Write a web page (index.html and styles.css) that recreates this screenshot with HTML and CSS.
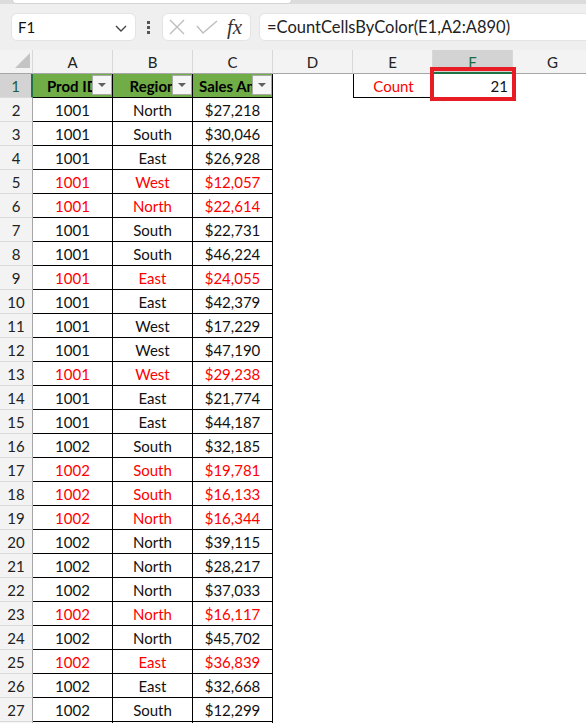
FILE: index.html
```html
<!DOCTYPE html>
<html lang="en">
<head>
    <meta charset="UTF-8">
    <meta name="viewport" content="width=device-width, initial-scale=1.0">
    <title>CountCellsByColor</title>
    <link rel="stylesheet" href="styles.css">
</head>
<body>

    <div class="formula-bar">
        <div class="ribbon-edge">
            <div class="ribbon-panel"></div>
        </div>
        <div class="bar-row">
            <div class="name-box">
                <span>F1</span>
                <svg class="chevron" width="12" height="7" viewBox="0 0 12 7"><path d="M1 1l5 5 5-5" fill="none" stroke="#444" stroke-width="1.4"/></svg>
            </div>
            <div class="grip"><i></i><i></i><i></i></div>
            <div class="fx-box">
                <svg width="16" height="16" viewBox="0 0 16 16"><path d="M1 1l14 14M15 1L1 15" stroke="#bdbdbd" stroke-width="1.4"/></svg>
                <svg width="22" height="14" viewBox="0 0 22 14"><path d="M1 6l6 7L21 1" fill="none" stroke="#bdbdbd" stroke-width="1.4"/></svg>
                <span class="fx">fx</span>
            </div>
            <div class="formula">=CountCellsByColor(E1,A2:A890)</div>
        </div>
    </div>

    <div class="sheet">
        <div class="row col-head">
            <div class="corner"><span></span></div>
            <div class="ch">A</div>
            <div class="ch">B</div>
            <div class="ch">C</div>
            <div class="ch">D</div>
            <div class="ch">E</div>
            <div class="ch selected">F</div>
            <div class="ch">G</div>
        </div>

        <div class="row">
            <div class="rh selected">1</div>
            <div class="c head"><span>Prod ID</span><b class="filter"></b></div>
            <div class="c head"><span>Region</span><b class="filter"></b></div>
            <div class="c head left"><span>Sales Amount</span><b class="filter"></b></div>
            <div class="blank"></div>
            <div class="label">Count</div>
            <div class="result">21</div>
        </div>

        <div class="row"><div class="rh">2</div><div class="c">1001</div><div class="c">North</div><div class="c">$27,218</div></div>
        <div class="row"><div class="rh">3</div><div class="c">1001</div><div class="c">South</div><div class="c">$30,046</div></div>
        <div class="row"><div class="rh">4</div><div class="c">1001</div><div class="c">East</div><div class="c">$26,928</div></div>
        <div class="row red"><div class="rh">5</div><div class="c">1001</div><div class="c">West</div><div class="c">$12,057</div></div>
        <div class="row red"><div class="rh">6</div><div class="c">1001</div><div class="c">North</div><div class="c">$22,614</div></div>
        <div class="row"><div class="rh">7</div><div class="c">1001</div><div class="c">South</div><div class="c">$22,731</div></div>
        <div class="row"><div class="rh">8</div><div class="c">1001</div><div class="c">South</div><div class="c">$46,224</div></div>
        <div class="row red"><div class="rh">9</div><div class="c">1001</div><div class="c">East</div><div class="c">$24,055</div></div>
        <div class="row"><div class="rh">10</div><div class="c">1001</div><div class="c">East</div><div class="c">$42,379</div></div>
        <div class="row"><div class="rh">11</div><div class="c">1001</div><div class="c">West</div><div class="c">$17,229</div></div>
        <div class="row"><div class="rh">12</div><div class="c">1001</div><div class="c">West</div><div class="c">$47,190</div></div>
        <div class="row red"><div class="rh">13</div><div class="c">1001</div><div class="c">West</div><div class="c">$29,238</div></div>
        <div class="row"><div class="rh">14</div><div class="c">1001</div><div class="c">East</div><div class="c">$21,774</div></div>
        <div class="row"><div class="rh">15</div><div class="c">1001</div><div class="c">East</div><div class="c">$44,187</div></div>
        <div class="row"><div class="rh">16</div><div class="c">1002</div><div class="c">South</div><div class="c">$32,185</div></div>
        <div class="row red"><div class="rh">17</div><div class="c">1002</div><div class="c">South</div><div class="c">$19,781</div></div>
        <div class="row red"><div class="rh">18</div><div class="c">1002</div><div class="c">South</div><div class="c">$16,133</div></div>
        <div class="row red"><div class="rh">19</div><div class="c">1002</div><div class="c">North</div><div class="c">$16,344</div></div>
        <div class="row"><div class="rh">20</div><div class="c">1002</div><div class="c">North</div><div class="c">$39,115</div></div>
        <div class="row"><div class="rh">21</div><div class="c">1002</div><div class="c">North</div><div class="c">$28,217</div></div>
        <div class="row"><div class="rh">22</div><div class="c">1002</div><div class="c">North</div><div class="c">$37,033</div></div>
        <div class="row red"><div class="rh">23</div><div class="c">1002</div><div class="c">North</div><div class="c">$16,117</div></div>
        <div class="row"><div class="rh">24</div><div class="c">1002</div><div class="c">North</div><div class="c">$45,702</div></div>
        <div class="row red"><div class="rh">25</div><div class="c">1002</div><div class="c">East</div><div class="c">$36,839</div></div>
        <div class="row"><div class="rh">26</div><div class="c">1002</div><div class="c">East</div><div class="c">$32,668</div></div>
        <div class="row"><div class="rh">27</div><div class="c">1002</div><div class="c">South</div><div class="c">$12,299</div></div>
        <div class="row"><div class="rh"></div><div class="c"></div><div class="c"></div><div class="c"></div></div>

        <div class="highlight"></div>
    </div>

</body>
</html>
```

FILE: styles.css
```css
body {
    margin: 0;
    width: 586px;
    height: 723px;
    overflow: hidden;
    background-color: #fff;
    font-family: Lato, "Open Sans", sans-serif;
    font-size: 15px;
    color: #111;
}
.formula-bar {
    height: 50px;
    background-color: #efefef;
}
.ribbon-edge {
    height: 4px;
    display: flex;
    background-color: #dcdcdc;
}
.ribbon-panel {
    width: 278px;
    margin-left: 12px;
    background-color: #fff;
    border: 1px solid #d4d4d4;
    border-top: none;
    border-radius: 0 0 6px 6px;
}
.bar-row {
    display: flex;
    align-items: center;
    height: 28px;
    margin-top: 9px;
    padding-left: 11px;
}
.name-box, .fx-box, .formula {
    height: 28px;
    box-sizing: border-box;
    background-color: #fff;
    border: 1px solid #e4e4e4;
    border-radius: 6px;
    display: flex;
    align-items: center;
}
.name-box {
    width: 125px;
    padding: 0 8px 0 6px;
    justify-content: space-between;
}
.chevron {
    margin-top: 2px;
}
.grip {
    display: flex;
    flex-direction: column;
    gap: 2px;
    margin: 0 12px 0 11px;
}
.grip i {
    width: 3px;
    height: 3px;
    background-color: #555;
}
.fx-box {
    width: 89px;
    padding-left: 6px;
    gap: 11px;
}
.fx {
    font-family: "Liberation Serif", serif;
    font-style: italic;
    font-size: 21px;
    color: #333;
    margin-left: -2px;
}
.formula {
    flex: 1;
    margin-left: 8px;
    margin-right: -10px;
    padding-left: 7px;
    font-size: 16.5px;
    color: #222;
}

.sheet {
    position: relative;
}
.row {
    display: grid;
    grid-template-columns: 33px repeat(7, 80px);
    height: 24px;
}
.row > div {
    box-sizing: border-box;
    height: 24px;
    line-height: 24px;
    text-align: center;
    white-space: nowrap;
    overflow: hidden;
}
.col-head > div {
    background-color: #f3f3f3;
    border-right: 1px solid #d8d8d8;
    border-bottom: 1px solid #a6a6a6;
    color: #222;
}
.corner {
    position: relative;
}
.corner span {
    position: absolute;
    left: 15px;
    top: 3px;
    width: 15px;
    height: 15px;
    background-color: #c4c4c4;
    clip-path: polygon(100% 0, 100% 100%, 0 100%);
}
.ch.selected {
    background-color: #d3d3d3;
    color: #1d6b45;
    border-bottom: 2px solid #217346;
}
.rh {
    background-color: #f3f3f3;
    border-right: 1px solid #a6a6a6;
    border-bottom: 1px solid #dadada;
    color: #222;
}
.rh.selected {
    background-color: #d3d3d3;
    border-right: 2px solid #217346;
    color: #1d5c3a;
}
.c {
    border-right: 1px solid #000;
    border-bottom: 1px solid #000;
}
.red .c {
    color: #f00;
}
.c.head {
    position: relative;
    background-color: #70ad47;
    font-weight: bold;
    color: #000;
}
.c.head.left {
    text-align: left;
    padding-left: 6px;
}
.filter {
    position: absolute;
    right: 0;
    top: 1px;
    width: 20px;
    height: 20px;
    box-sizing: border-box;
    background-color: #f5f5f5;
    border: 1px solid #a9a9a9;
}
.filter::after {
    content: "";
    position: absolute;
    left: 5px;
    top: 7px;
    border-left: 4px solid transparent;
    border-right: 4px solid transparent;
    border-top: 4px solid #5f5f5f;
}
.label {
    color: #f00;
    border-left: 1px solid #000;
    border-bottom: 1px solid #000;
}
.result {
    text-align: right !important;
    padding-right: 5px;
}
.highlight {
    position: absolute;
    left: 430px;
    top: 17px;
    width: 86px;
    height: 34px;
    box-sizing: border-box;
    border: 4px solid #e81c24;
}
```
